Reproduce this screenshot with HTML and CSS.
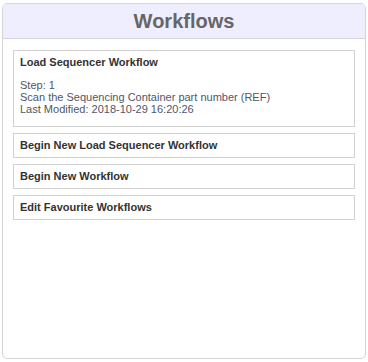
FILE: index.html
```html
<!DOCTYPE html>
<html lang="en">
  <head>
    <meta charset="UTF-8" >
    <meta name="viewport" content="width=device-width, initial-scale=1.0" >
    <title>Workflows</title>
    <link rel="stylesheet" href="styles.css">
  </head>
  <body>
    <div class="panel">
      <div class="panel-header">
        <h1>Workflows</h1>
      </div>
      <div class="panel-body">
        <div class="workflow-card">
          <div class="card-title">Load Sequencer Workflow</div>
          <div class="card-details">
            Step: 1<br>
            Scan the Sequencing Container part number (REF)<br>
            Last Modified: 2018-10-29 16:20:26
          </div>
        </div>
        <div class="workflow-card">
          <div class="card-title">Begin New Load Sequencer Workflow</div>
        </div>
        <div class="workflow-card">
          <div class="card-title">Begin New Workflow</div>
        </div>
        <div class="workflow-card">
          <div class="card-title">Edit Favourite Workflows</div>
        </div>
      </div>
    </div>
  </body>
</html>
```

FILE: styles.css
```css
  body {
    font-family: "Liberation Sans", Arial, sans-serif;
    margin: 0;
    background-color: #fff;
  }

  .panel {
    margin: 3px 2px 0 2px;
    height: 354px;
    border: 1px solid #d4d4d4;
    border-radius: 5px;
    overflow: hidden;
    display: flex;
    flex-direction: column;
  }

  .panel-header {
    background-color: #eeeefe;
    border-bottom: 1px solid #d4d4dc;
    height: 34px;
    display: flex;
    align-items: center;
    justify-content: center;
  }

  .panel-header h1 {
    margin: 0;
    font-size: 20px;
    font-weight: bold;
    color: #666;
  }

  .panel-body {
    padding: 11px 10px;
    display: flex;
    flex-direction: column;
    gap: 6px;
  }

  .workflow-card {
    border: 1px solid #d2d2d2;
    padding: 5px 6px;
  }

  .card-title {
    font-size: 11px;
    font-weight: bold;
    line-height: 13px;
    color: #333;
  }

  .card-details {
    margin: 10px 0 6px;
    font-size: 11px;
    line-height: 12px;
    color: #4f5668;
  }
```
